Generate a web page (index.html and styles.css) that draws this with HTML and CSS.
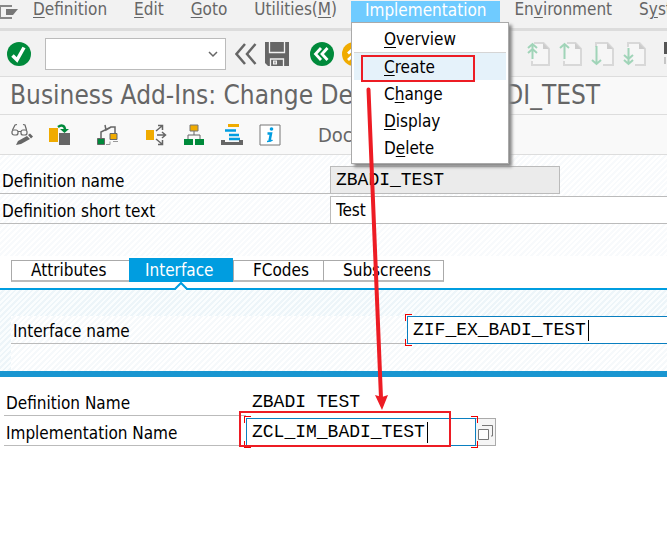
FILE: index.html
```html
<!DOCTYPE html>
<html lang="en">
<head>
<meta charset="utf-8">
<title>Business Add-Ins: Change Definition ZBADI_TEST</title>
<link rel="stylesheet" href="styles.css">
</head>
<body>
<nav class="menubar">
  <button class="system-icon" aria-label="Window menu"><svg width="19" height="14" viewBox="0 0 19 14"><path d="M12 1H0v12h12" fill="none" stroke="#888" stroke-width="2"/><path d="M6 4h12l-5 6H6z" fill="#777"/></svg></button>
  <button class="menu"><u>D</u>efinition</button>
  <button class="menu"><u>E</u>dit</button>
  <button class="menu"><u>G</u>oto</button>
  <button class="menu">Utilities(<u>M</u>)</button>
  <div class="menu-group">
    <button class="menu menu-open">Implementation</button>
    <div class="dropdown">
      <button class="item item-first"><u>O</u>verview</button>
      <button class="item item-active"><u>C</u>reate</button>
      <button class="item">C<u>h</u>ange</button>
      <button class="item"><u>D</u>isplay</button>
      <button class="item">D<u>e</u>lete</button>
    </div>
  </div>
  <button class="menu">En<u>v</u>ironment</button>
  <button class="menu menu-last">S<u>y</u>stem</button>
</nav>

<div class="toolbar">
  <button class="icon" aria-label="Enter"><svg width="24" height="24" viewBox="0 0 24 24"><circle cx="12" cy="12" r="12" fill="#008a3b"/><path d="M5.500 13.500l4.500 4.500L17 5.500" fill="none" stroke="#fff" stroke-width="3.500"/></svg></button>
  <div class="command">
    <select aria-label="Command"><option></option></select>
    <svg class="command-arrow" width="10" height="7" viewBox="0 0 10 7"><path d="M1 1l4 4 4-4" fill="none" stroke="#666" stroke-width="1.500"/></svg>
  </div>
  <button class="icon" aria-label="Collapse"><svg width="22" height="24" viewBox="0 0 22 24"><path d="M10 2L1.500 12 10 22M20.500 2L12 12l8.500 10" fill="none" stroke="#666" stroke-width="2.500"/></svg></button>
  <button class="icon save" aria-label="Save"><svg width="24" height="24" viewBox="0 0 24 24"><path d="M0 0h24v24H3l-3-3z" fill="#666"/><path d="M4.500 0v10.500h15V0M5.500 24v-7h13v7" fill="none" stroke="#f2f2f2" stroke-width="1.300"/><path d="M8 18.500h4v4H8z" fill="#f2f2f2"/><path d="M10 19.500v2" stroke="#666"/></svg></button>
  <button class="icon" aria-label="Back"><svg width="24" height="24" viewBox="0 0 24 24"><circle cx="12" cy="12" r="12" fill="#008a3b"/><path d="M11 6l-5.500 6 5.500 6M17.500 6L12 12l5.500 6" fill="none" stroke="#fff" stroke-width="2.800"/></svg></button>
  <button class="icon exit" aria-label="Exit"><svg width="24" height="24" viewBox="0 0 24 24"><circle cx="12" cy="12" r="12" fill="#f0ab00"/><path d="M6 11.500L12 6l6 5.500M6 18l6-5.500 6 5.500" fill="none" stroke="#fff" stroke-width="2.800"/></svg></button>
  <div class="pages">
    <button class="icon" aria-label="First page"><svg width="23" height="24" viewBox="0 0 23 24"><path class="sheet" d="M7 1h9.500L22 7v16H5v-4"/><path class="fold" d="M16 1v6h6z"/><path class="move" d="M5.500 17V2M1 6l4.500-4L10 6M1 11l4.500-4 4.500 4"/></svg></button>
    <button class="icon" aria-label="Previous page"><svg width="23" height="24" viewBox="0 0 23 24"><path class="sheet" d="M8 1h8.500L22 7v16H5v-4"/><path class="fold" d="M16 1v6h6z"/><path class="move" d="M5.500 17V2M1 6l4.500-4L10 6"/></svg></button>
    <button class="icon" aria-label="Next page"><svg width="23" height="24" viewBox="0 0 23 24"><path class="sheet" d="M5 5V1h11.500L22 7v16H12"/><path class="fold" d="M16 1v6h6z"/><path class="move" d="M5.500 4v18M1 18l4.500 4 4.500-4"/></svg></button>
    <button class="icon" aria-label="Last page"><svg width="23" height="24" viewBox="0 0 23 24"><path class="sheet" d="M5 5V1h11.500L22 7v16H12"/><path class="fold" d="M16 1v6h6z"/><path class="move" d="M5.500 6v16M1 18l4.500 4 4.500-4M1 13l4.500 4 4.500-4"/></svg></button>
  </div>
  <button class="icon session" aria-label="New session"><svg width="24" height="24" viewBox="0 0 24 24"><path d="M0 0h24v12H0z" fill="#555"/><path d="M1 15v7" stroke="#999"/></svg></button>
</div>

<h1 class="title">Business Add-Ins: Change Definition <span class="title-name">ZBADI_TEST</span></h1>

<div class="actions">
  <button class="icon" aria-label="Display or change"><svg width="22" height="24" viewBox="0 0 22 24"><g fill="none" stroke="#666" stroke-width="1.200"><rect x="1" y="7" width="6" height="5" rx="2"/><rect x="10" y="7" width="6" height="5" rx="2"/><path d="M7 8.500h3M1.500 7L4 2l2-.5M15.500 7L14 2l-2-.5"/></g><path d="M5 22l2-4 9-5 3 3-9 5z" fill="#666"/><path d="M17 12l2-1.500 3 3-2 2z" fill="#666"/></svg></button>
  <button class="icon" aria-label="Other object"><svg width="22" height="24" viewBox="0 0 22 24"><path d="M0 5h9v14H0z" fill="#f0ab00"/><path d="M10 10h11v12H10z" fill="#666"/><path d="M9 4c4-3 7-1 7 3" fill="none" stroke="#008a3b" stroke-width="2.500"/><path d="M11 6h9l-4.500 4z" fill="#008a3b"/></svg></button>
  <button class="icon icon-spaced" aria-label="Where used"><svg width="22" height="24" viewBox="0 0 22 24"><path d="M4 15V9l10-5h4v6M8 2l1 5 5-3" fill="none" stroke="#666" stroke-width="1.500"/><path d="M.5 15.500h7v6h-7z" fill="#008a3b" stroke="#666"/><path d="M13 10.500h7v6h-7z" fill="#f0ab00" stroke="#666"/><path d="M9 21.500h4v-3M16 18.500h5" fill="none" stroke="#999"/></svg></button>
  <button class="icon icon-spaced" aria-label="Branch"><svg width="22" height="24" viewBox="0 0 22 24"><path d="M1 7h8v10H1z" fill="#f0ab00"/><path d="M11 8l6-5M12 12h8M11 16l6 5M13 2.500h4.500V7M17 9l3.500 3-3.500 3M13 21.500h4.500V17" fill="none" stroke="#666" stroke-width="1.500"/></svg></button>
  <button class="icon" aria-label="Hierarchy"><svg width="22" height="24" viewBox="0 0 22 24"><path d="M11 8v4M5 17v-5h12v5" fill="none" stroke="#666"/><path d="M7 2h8v6H7z" fill="#f0ab00" stroke="#777"/><path d="M1 16h9v6H1zM12 16h9v6h-9z" fill="#008a3b"/></svg></button>
  <button class="icon" aria-label="Object list"><svg width="22" height="24" viewBox="0 0 22 24"><path d="M7 2.500h11" stroke="#f0ab00" stroke-width="3"/><path d="M4 7.500h11M8 12h10M8 16h11" stroke="#009de0" stroke-width="2.500"/><path d="M0 17h4v2h14v-2h4v5H0z" fill="#666"/></svg></button>
  <button class="icon" aria-label="Information"><svg width="22" height="24" viewBox="0 0 22 24"><path d="M1 2h20v20H1z" fill="#fff" stroke="#777"/><circle cx="12.500" cy="6" r="1.800" fill="#009de0"/><path d="M8.500 10.500H12L10.500 18" fill="none" stroke="#009de0" stroke-width="2.500"/><path d="M8 18.500c2 0 4 0 5.500-1.500" fill="none" stroke="#009de0" stroke-width="1.500"/></svg></button>
  <button class="text-button">Documentation</button>
</div>

<main>
  <section class="header-form">
    <div class="row">
      <label for="def">Definition name</label>
      <input id="def" class="field mono readonly" value="ZBADI_TEST" readonly>
    </div>
    <div class="row">
      <label for="text">Definition short text</label>
      <input id="text" class="field wide" value="Test">
    </div>
  </section>

  <div class="tabs" role="tablist">
    <button class="tab" role="tab">Attributes</button>
    <button class="tab tab-active" role="tab" aria-selected="true">Interface</button>
    <button class="tab" role="tab">FCodes</button>
    <button class="tab" role="tab">Subscreens</button>
    <svg class="tab-pointer" width="14" height="9" viewBox="0 0 14 9"><path d="M1 9l6-6 6 6z" fill="#fff"/><path d="M0 8h1l6-6 6 6h1" fill="none" stroke="#009de0" stroke-width="2"/></svg>
  </div>

  <section class="panel">
    <div class="panel-body">
      <div class="row">
        <label for="intf">Interface name</label>
        <div class="focus open-end">
          <input id="intf" class="mono" value="ZIF_EX_BADI_TEST">
          <span class="caret"></span>
          <i class="corner tl"></i><i class="corner bl"></i>
        </div>
      </div>
    </div>
  </section>

  <section class="dialog">
    <div class="row">
      <label for="dname">Definition Name</label>
      <output id="dname" class="mono">ZBADI TEST</output>
    </div>
    <div class="row">
      <label for="iname">Implementation Name</label>
      <div class="focus">
        <input id="iname" class="mono" value="ZCL_IM_BADI_TEST">
        <span class="caret"></span>
        <i class="corner tl"></i><i class="corner bl"></i><i class="corner tr"></i><i class="corner br"></i>
      </div>
      <button class="help" aria-label="Choose value"><svg width="17" height="17" viewBox="0 0 17 17"><path d="M5 1.500h10.500V12H14" fill="none" stroke="#777"/><path d="M1.500 5.500h10v10h-10z" fill="#fff" stroke="#777"/></svg></button>
    </div>
  </section>
</main>

<svg class="annotations" width="667" height="543" viewBox="0 0 667 543" aria-hidden="true">
  <g fill="none" stroke="#ed1c24" stroke-width="2"><path d="M362 56h112v25H362z"/><path d="M240 412h210v34H240z"/></g>
  <path d="M368.500 89.500L381 398" stroke="#ed1c24" stroke-width="4" stroke-linecap="round"/>
  <path d="M375 395l7 2 6-2-6 15z" fill="#ed1c24"/>
</svg>
</body>
</html>
```
FILE: styles.css
```css
* { box-sizing: border-box; }

body {
  position: relative;
  margin: 0;
  min-height: 100vh;
  overflow: hidden;
  background: #fff;
  color: #000;
  font: 17px/20px "DejaVu Sans Condensed", "Noto Sans", sans-serif;
}

button, input, select {
  margin: 0;
  padding: 0;
  border: 0;
  border-radius: 0;
  background: none;
  color: inherit;
  font: inherit;
  outline: none;
}

button { flex: none; white-space: nowrap; }
svg { display: block; }
u { text-underline-offset: 2px; text-decoration-thickness: 1px; }

.menubar {
  display: flex;
  gap: 1px;
  height: 31px;
  background: #f2f2f2;
  border-bottom: 3px solid #dcdcdc;
  color: #666;
}
.system-icon { width: 19px; height: 24px; }
.menu { height: 22px; padding: 0 13px 4px; line-height: 18px; }
.menu-last { flex: 1 1 0; min-width: 0; padding-right: 0; overflow: hidden; text-align: left; }
.menu-group { position: relative; }
.menu-open { padding: 0 14px 4px; background: #6fcbff; color: #fff; }

.dropdown {
  position: absolute;
  z-index: 2;
  top: 22px;
  left: 0;
  width: 158px;
  padding: 2px;
  border: 1px solid #aaa;
  background: #fff;
  box-shadow: 3px 3px 3px #888;
  color: #000;
}
.item { display: block; width: 100%; height: 27px; padding-left: 30px; text-align: left; }
.item-first { height: 28px; border-bottom: 1px solid #d5d5d5; }
.item-active { background: #e5f2fa; }

.toolbar {
  display: flex;
  align-items: center;
  height: 46px;
  padding-left: 7px;
  overflow: hidden;
  background: #f2f2f2;
  border-bottom: 1px solid #ddd;
}
.command { position: relative; flex: none; width: 181px; height: 32px; margin: 0 9px 0 14px; }
.command select { width: 100%; height: 100%; appearance: none; background: #fff; border: 1px solid #bbb; }
.command-arrow { position: absolute; right: 8px; top: 13px; pointer-events: none; }
.save { margin: 0 21px 0 8px; }
.exit { margin-left: 8px; }
.pages { display: flex; flex: none; gap: 9px; margin-left: 161px; }
.session { margin-left: 18px; }
.sheet { fill: #f6f6f6; stroke: #d8d8d8; stroke-width: 2; }
.fold { fill: #ccc; }
.move { fill: none; stroke: #a0d4b8; stroke-width: 2; }

.title {
  margin: 0;
  height: 38px;
  padding-left: 10px;
  overflow: hidden;
  background: #f9f9f9;
  border-bottom: 1px solid #ddd;
  color: #666;
  font-size: 26px;
  font-weight: 400;
  line-height: 37px;
  white-space: nowrap;
}
.title-name { margin-left: 16px; }

.actions {
  display: flex;
  align-items: center;
  gap: 16px;
  height: 40px;
  padding-left: 11px;
  background: #f9f9f9;
  border-bottom: 1px solid #ddd;
}
.icon-spaced { margin-left: 10px; }
.text-button { margin-left: 21px; color: #666; font-size: 20px; }

.header-form {
  display: grid;
  gap: 2px;
  padding: 11px 0 32px;
  background: repeating-linear-gradient(135deg, #fff 0 2px, #f8fafc 2px 4px);
}
.row { display: flex; height: 28px; }
.row label { flex: none; border-bottom: 1px solid #bbb; line-height: 30px; white-space: nowrap; }
.mono { font: 18px/20px "Liberation Mono", monospace; }
.header-form label { width: 330px; padding-left: 2px; }
.field { min-width: 0; width: 230px; padding-left: 5px; background: #fff; border: 1px solid #bbb; }
.readonly { background: #ebebeb; }
.wide { flex: 1; border-right: 0; }

.tabs {
  position: relative;
  display: grid;
  grid-template-columns: 118px 104px 90px 121px;
  align-items: end;
  height: 34px;
  padding: 2px 0 8px 11px;
  border-bottom: 2px solid #009de0;
}
.tab { height: 22px; padding-left: 19px; text-align: left; border: 1px solid #aaa; border-bottom: 2px solid #bbb; border-right: 0; background: #fff; line-height: 19px; }
.tab:nth-child(4) { border-right: 1px solid #aaa; }
.tab-active { height: 24px; padding: 2px 0 0 15px; border-color: #009de0; background: #009de0; color: #fff; }
.tab-pointer { position: absolute; left: 174px; bottom: -2px; }

.panel {
  padding: 26px 0 0 11px;
  background: repeating-linear-gradient(135deg, #fafdfe 0 2px, #edf5f9 2px 4px);
}
.panel-body { height: 55px; background: repeating-linear-gradient(135deg, #fff 0 2px, #f6f9fb 2px 4px); }
.panel label { width: 396px; padding-left: 2px; }

.focus { position: relative; width: 230px; border: 1px solid #0a7fc0; background: #fff; }
.focus input { width: 100%; height: 26px; padding-left: 5px; }
.open-end { flex: 1; border-right: 0; }
.caret { position: absolute; top: 3px; left: 180px; width: 1px; height: 21px; background: #000; }
.corner { position: absolute; width: 7px; height: 7px; border: 0 solid #e00; }
.tl { left: -3px; top: -3px; border-width: 1px 0 0 1px; }
.bl { left: -3px; bottom: -3px; border-width: 0 0 1px 1px; }
.tr { right: -3px; top: -3px; border-width: 1px 1px 0 0; }
.br { right: -3px; bottom: -3px; border-width: 0 1px 1px 0; }

.dialog {
  display: grid;
  gap: 2px;
  padding: 11px 0 0 4px;
  border-top: 6px solid #1996d1;
}
.dialog label { width: 242px; padding-left: 2px; }
.dialog output { padding-left: 6px; line-height: 28px; }
.help { width: 20px; padding-left: 1px; background: #f5f5f5; border: 1px solid #aaa; border-left: 0; }

.annotations { position: absolute; z-index: 3; top: 0; left: 0; pointer-events: none; }
```
